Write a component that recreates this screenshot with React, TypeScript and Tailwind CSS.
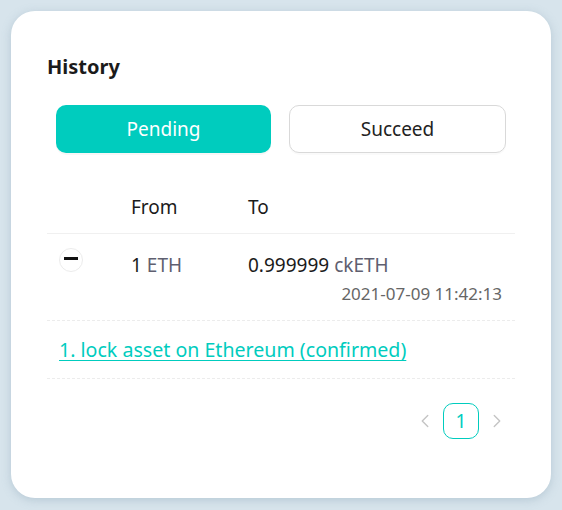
import { ChevronLeft, ChevronRight } from "lucide-react"

type Row = {
  amount: string
  token: string
  toAmount: string
  toToken: string
  time: string
  steps: string[]
}

const rows: Row[] = [
  {
    amount: "1",
    token: "ETH",
    toAmount: "0.999999",
    toToken: "ckETH",
    time: "2021-07-09 11:42:13",
    steps: ["1. lock asset on Ethereum (confirmed)"],
  },
]

export default function App() {
  return (
    <div
      className="min-h-[510px] w-[562px] bg-[#d7e4ec] p-[11px]"
      style={{ fontFamily: '"Noto Sans", "Open Sans", sans-serif' }}
    >
      <div className="h-[487px] w-[540px] rounded-[24px] bg-white pl-[36px] pr-[36px] pt-[42px] shadow-[0_2px_10px_rgba(120,150,170,0.35)]">
        <h2 className="text-[20px] font-bold leading-[28px] text-[#1b1b1b]">History</h2>

        <div className="mt-[24px] flex gap-[18px] px-[9px]">
          <button className="h-[48px] flex-1 rounded-[10px] bg-[#00ccbe] text-[19px] text-white shadow-[0_2px_0_rgba(0,0,0,0.03)]">
            Pending
          </button>
          <button className="h-[48px] flex-1 rounded-[10px] border border-[#d9d9d9] bg-white text-[19px] text-[#222] shadow-[0_2px_0_rgba(0,0,0,0.02)]">
            Succeed
          </button>
        </div>

        <div className="mt-[30px]">
          <div className="flex h-[51px] items-center border-b border-[#f0f0f0] pb-[2px] text-[19px] text-[#1b1b1b]">
            <div className="w-[84px]" />
            <div className="w-[117px]">From</div>
            <div>To</div>
          </div>

          {rows.map((row, i) => (
            <div key={i}>
              <div className="flex h-[87px] border-b border-dashed border-[#ececec]">
                <div className="w-[84px] pl-[12px] pt-[14px]">
                  <div className="flex h-[24px] w-[24px] items-center justify-center rounded-full border border-[#ececec]">
                    <div className="h-[3px] w-[14px] -translate-y-[2px] bg-[#111]" />
                  </div>
                </div>
                <div className="w-[117px] pt-[19px] text-[19px] leading-[24px]">
                  <span className="text-[#1b1b1b]">{row.amount}</span>{" "}
                  <span className="text-[#5f5f70]">{row.token}</span>
                </div>
                <div className="flex flex-1 flex-col pr-[13px] pt-[19px]">
                  <div className="text-[19px] leading-[24px]">
                    <span className="text-[#1b1b1b]">{row.toAmount}</span>{" "}
                    <span className="text-[#5f5f70]">{row.toToken}</span>
                  </div>
                  <div className="mt-[6px] text-right text-[17px] leading-[22px] text-[#666]">
                    {row.time}
                  </div>
                </div>
              </div>
              {row.steps.map((s) => (
                <div
                  key={s}
                  className="flex h-[58px] items-center border-b border-dashed border-[#ececec] pl-[12px]"
                >
                  <a className="text-[19.6px] text-[#00ccbe] underline underline-offset-[3px]" href="#">
                    {s}
                  </a>
                </div>
              ))}
            </div>
          ))}

          <div className="mt-[24px] flex items-center justify-end gap-[7px] pr-[7px]">
            <ChevronLeft className="h-[22px] w-[22px] text-[#c4c4c4]" strokeWidth={1.5} />
            <div className="flex h-[36px] w-[36px] items-center justify-center rounded-[10px] border border-[#00ccbe] text-[19px] text-[#00ccbe]">
              1
            </div>
            <ChevronRight className="h-[22px] w-[22px] text-[#c4c4c4]" strokeWidth={1.5} />
          </div>
        </div>
      </div>
    </div>
  )
}
